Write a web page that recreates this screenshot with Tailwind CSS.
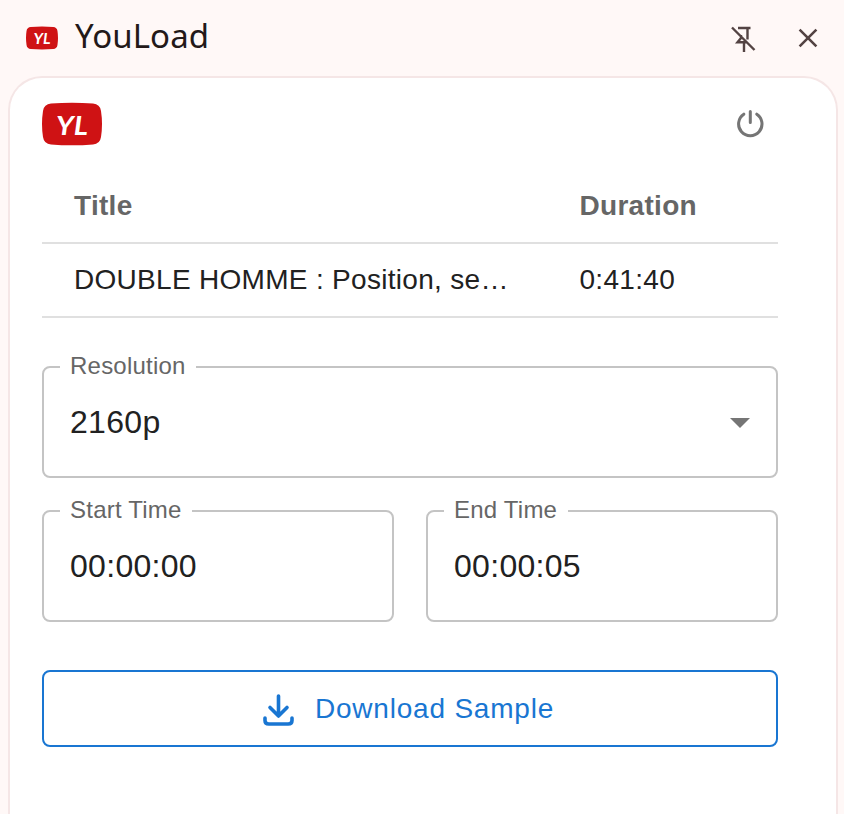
<!DOCTYPE html>
<html lang="en">
<head>
<meta charset="utf-8">
<title>YouLoad</title>
<script src="https://cdn.jsdelivr.net/npm/@tailwindcss/browser@4"></script>
</head>
<body class="h-[814px] overflow-hidden bg-[#fff8f7] font-['Liberation_Sans',Arial,sans-serif] text-[#212121]">
<div class="flex h-[814px] flex-col">
  <header class="flex h-[76px] shrink-0 items-center pr-6 pl-[26px]">
    <svg class="h-6 w-8 shrink-0" viewBox="0 0 60 44">
      <path d="M9 1.500Q30-.2 51 1.500Q58 2 59 9Q61 22 59 35Q58 42 51 42.500Q30 44.200 9 42.500Q2 42 1 35Q-1 22 1 9Q2 2 9 1.500Z" fill="#cf1214"/>
      <text x="14" y="32.500" textLength="32" lengthAdjust="spacingAndGlyphs" font-family="Lato" font-size="28" font-weight="700" font-style="italic" fill="#fff">YL</text>
    </svg>
    <h1 class="ml-[17px] -mt-1 font-['Noto_Sans',sans-serif] text-[33px] leading-[44px] tracking-[0.100px] text-[#231919]">YouLoad</h1>
    <div class="ml-auto flex items-center gap-[37px]">
      <svg class="size-8" viewBox="0 0 32 32" fill="none" stroke="#534343" stroke-width="2.400">
        <path d="M5 5.500L27.500 28M11 6h12.500M20.500 6v11.500M14 13v3L10.500 20.200h9M17 20v10"/>
      </svg>
      <svg class="size-6" viewBox="0 0 24 24" fill="none" stroke="#534343" stroke-width="2.600">
        <path d="M3.600 3.600l16.800 16.800M20.400 3.600L3.600 20.400"/>
      </svg>
    </div>
  </header>
  <main class="mr-[6px] ml-2 flex min-h-0 flex-1 flex-col rounded-t-[34px] border-2 border-b-0 border-[#f5e6e6] bg-white pt-6 pr-[58px] pl-8">
    <div class="flex h-11 shrink-0 items-center justify-between pr-3">
      <svg class="h-11 w-[60px]" viewBox="0 0 60 44">
        <path d="M9 1.500Q30-.2 51 1.500Q58 2 59 9Q61 22 59 35Q58 42 51 42.500Q30 44.200 9 42.500Q2 42 1 35Q-1 22 1 9Q2 2 9 1.500Z" fill="#cf1214"/>
        <text x="14" y="32.500" textLength="32" lengthAdjust="spacingAndGlyphs" font-family="Lato" font-size="27" font-weight="700" font-style="italic" fill="#fff">YL</text>
      </svg>
      <svg class="-mt-[2px] size-8" viewBox="0 0 32 32" fill="none" stroke="#757575" stroke-width="3" stroke-linecap="round">
        <path d="M16.300 4.500v11M9.800 7.200a11.700 11.700 0 1 0 13 0"/>
      </svg>
    </div>
    <div class="mt-[22px] text-[28px] leading-10 tracking-[0.3px]">
      <div class="flex h-[76px] items-center border-b-2 border-[#e0e0e0] pt-[2px] pl-8 font-bold text-[#666666]">
        <div class="w-[505.500px]">Title</div><div>Duration</div>
      </div>
      <div class="flex h-[74px] items-center border-b-2 border-[#e0e0e0] pl-8">
        <div class="w-[505.500px]">DOUBLE HOMME : Position, se…</div><div>0:41:40</div>
      </div>
    </div>
    <div class="relative mt-12 flex h-28 shrink-0 items-center justify-between rounded-lg border-2 border-[#c4c4c4] px-[26px] text-[32px] tracking-[0.3px]">
      <label class="absolute -top-[17px] left-4 w-[136px] bg-white pl-[10px] text-2xl leading-[30px] tracking-[0.225px] text-[#666666]">Resolution</label>
      <span>2160p</span>
      <svg class="mt-[2px] h-[10px] w-5" viewBox="0 0 20 10"><path d="M0 0h20L10 10z" fill="#757575"/></svg>
    </div>
    <div class="mt-8 grid grid-cols-2 gap-8 text-[32px] tracking-[0.3px]">
      <div class="relative flex h-28 items-center rounded-lg border-2 border-[#c4c4c4] px-[26px]">
        <label class="absolute -top-[17px] left-4 w-[132px] bg-white pl-[10px] text-2xl leading-[30px] tracking-[0.225px] text-[#666666]">Start Time</label>
        <span>00:00:00</span>
      </div>
      <div class="relative flex h-28 items-center rounded-lg border-2 border-[#c4c4c4] px-[26px]">
        <label class="absolute -top-[17px] left-4 w-[124px] bg-white pl-[10px] text-2xl leading-[30px] tracking-[0.225px] text-[#666666]">End Time</label>
        <span>00:00:05</span>
      </div>
    </div>
    <button class="mt-12 flex h-[77px] shrink-0 items-center justify-center rounded-lg border-2 border-[#1976d2] pr-[3px] text-[28px] tracking-[0.8px] text-[#1976d2]">
      <svg class="mt-[3px] mr-[21px] h-8 w-[31px]" viewBox="0 0 31 32" fill="none" stroke="#1976d2" stroke-width="3.600" stroke-linecap="round" stroke-linejoin="round">
        <path d="M15.500 2v20M7 13.500l8.500 8.500L24 13.500M2 24v2.500q0 3.500 3.800 3.500h19.400q3.800 0 3.800-3.500v-2.500"/>
      </svg>
      <span>Download Sample</span>
    </button>
  </main>
</div>
</body>
</html>
